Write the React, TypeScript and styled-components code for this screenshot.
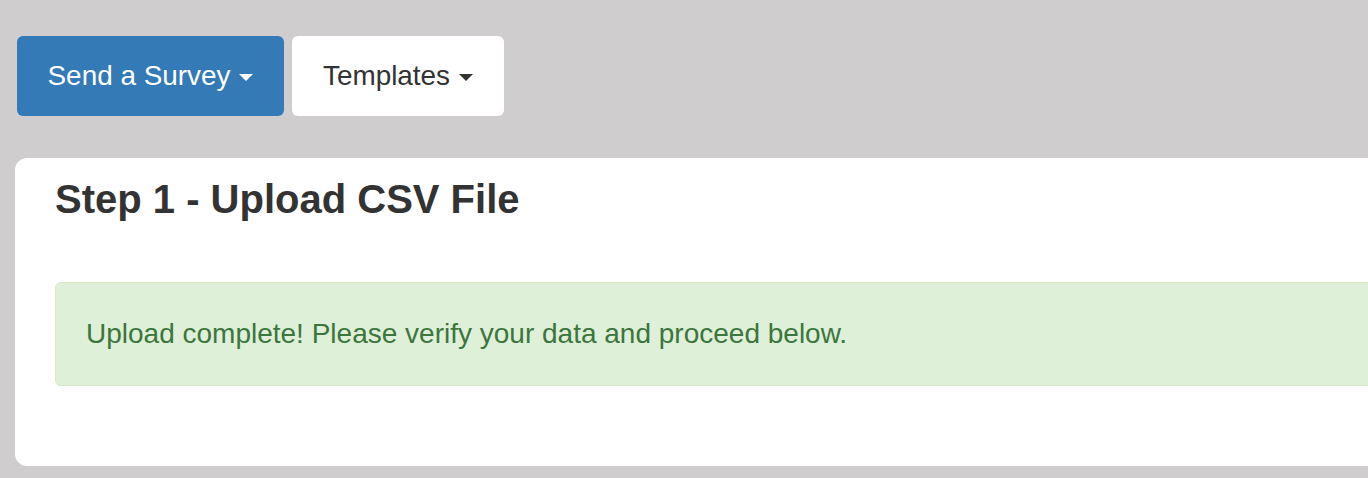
import React from "react";
import styled, { createGlobalStyle } from "styled-components";

const Global = createGlobalStyle`
  html, body {
    margin: 0;
    padding: 0;
    background: #cfcdce;
    font-family: "Liberation Sans", Arial, Helvetica, sans-serif;
    overflow: hidden;
  }
  * { box-sizing: border-box; }
`;

const Page = styled.div`
  width: 1368px;
  height: 478px;
  padding: 36px 0 0 15px;
`;

const Toolbar = styled.div`
  display: flex;
  gap: 8px;
  padding-left: 2px;
`;

const DropButton = styled.button<{ $primary?: boolean; $w: number }>`
  display: flex;
  align-items: center;
  justify-content: center;
  width: ${(p) => p.$w}px;
  height: 80px;
  padding: 0;
  border: none;
  border-radius: 6px;
  font-family: inherit;
  font-size: 27.9px;
  background: ${(p) => (p.$primary ? "#337ab7" : "#ffffff")};
  color: ${(p) => (p.$primary ? "#ffffff" : "#333333")};
  cursor: pointer;
`;

const Caret = styled.span`
  display: inline-block;
  width: 0;
  height: 0;
  margin-left: 9px;
  margin-top: 2px;
  border-left: 7.5px solid transparent;
  border-right: 7.5px solid transparent;
  border-top: 7.5px solid currentColor;
`;

const Card = styled.section`
  margin-top: 42px;
  width: 1400px;
  height: 308px;
  background: #ffffff;
  border-radius: 12px;
  padding: 19px 0 0 40px;
`;

const Title = styled.h3`
  margin: 0;
  font-size: 40px;
  line-height: 44px;
  font-weight: 700;
  color: #333333;
`;

const Alert = styled.div`
  margin-top: 61px;
  height: 104px;
  display: flex;
  align-items: center;
  padding: 0 30px;
  background: #dff0d8;
  border: 1px solid #d6e9c6;
  border-radius: 6px;
  color: #3c763d;
  font-size: 28px;
`;

export default function App() {
  return (
    <Page>
      <Global />
      <Toolbar>
        <DropButton $primary $w={267}>
          Send a Survey
          <Caret />
        </DropButton>
        <DropButton $w={212}>
          Templates
          <Caret />
        </DropButton>
      </Toolbar>
      <Card>
        <Title>Step 1 - Upload CSV File</Title>
        <Alert>Upload complete! Please verify your data and proceed below.</Alert>
      </Card>
    </Page>
  );
}
